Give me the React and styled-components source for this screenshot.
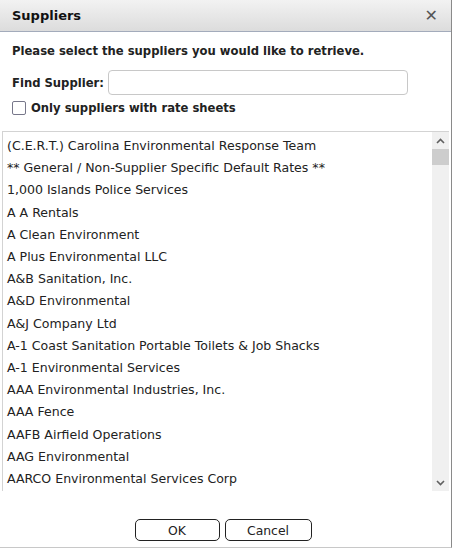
import React from 'react'
import styled, { createGlobalStyle } from 'styled-components'

const GlobalStyle = createGlobalStyle`
  html, body {
    margin: 0;
    padding: 0;
    background: #fff;
  }
  body {
    font-family: "DejaVu Sans", Verdana, sans-serif;
    color: #222;
  }
`

const Dialog = styled.div`
  width: 452px;
  height: 548px;
  box-sizing: border-box;
  display: flex;
  flex-direction: column;
  border-right: 1px solid #8a8a8a;
  border-bottom: 1px solid #c8c8c8;
  background: #fff;
`

const TitleBar = styled.div`
  height: 31px;
  flex-shrink: 0;
  display: flex;
  align-items: center;
  justify-content: space-between;
  padding: 0 12px;
  background: linear-gradient(#f2f2f2, #dcdcdc);
  border-bottom: 1px solid #a3abbb;
`

const Title = styled.span`
  font-size: 13px;
  font-weight: bold;
  color: #111;
`

const Close = styled.span`
  font-size: 16px;
  font-weight: bold;
  color: #555;
  margin-right: 1px;
  cursor: pointer;
`

const Body = styled.div`
  padding: 11px 0 0 12px;
  display: flex;
  flex-direction: column;
`

const Prompt = styled.div`
  font-size: 11.6px;
  font-weight: bold;
  line-height: 16px;
`

const FindRow = styled.div`
  display: flex;
  align-items: center;
  gap: 4px;
  margin-top: 11px;
  font-size: 11.6px;
  font-weight: bold;
`

const SearchInput = styled.input`
  width: 300px;
  height: 25px;
  box-sizing: border-box;
  border: 1px solid #c8c8c8;
  border-radius: 4px;
  outline: none;
`

const CheckRow = styled.label`
  display: flex;
  align-items: center;
  gap: 5px;
  margin-top: 6px;
  font-size: 11.6px;
  font-weight: bold;
`

const Box = styled.span`
  width: 12px;
  height: 12px;
  border: 1px solid #77778a;
  border-radius: 2px;
  background: #fff;
`

const ListWrap = styled.div`
  margin: 16px 2px 0 2px;
  height: 359px;
  display: flex;
  border: 1px solid #d3d3d3;
  border-bottom: none;
  border-right: none;
`

const List = styled.ul`
  flex: 1;
  list-style: none;
  margin: 0;
  padding: 3px 0 0 4px;
  overflow: hidden;
`

const Item = styled.li`
  font-size: 12.55px;
  line-height: 22.2px;
  white-space: nowrap;
  color: #222;
`

const ScrollBar = styled.div`
  width: 17px;
  display: flex;
  flex-direction: column;
  background: #f0f0f0;
`

const Arrow = styled.div`
  height: 17px;
  display: flex;
  align-items: center;
  justify-content: center;
`

const Track = styled.div`
  flex: 1;
`

const Thumb = styled.div`
  height: 16px;
  background: #cdcdcd;
`

const Footer = styled.div`
  flex: 1;
  display: flex;
  justify-content: center;
  align-items: flex-end;
  gap: 5px;
  padding-bottom: 6px;
  padding-right: 5px;
`

const Button = styled.button`
  width: ${ ({ wide }) => wide ? 87 : 85 }px;
  height: 22px;
  border: 1px solid #222;
  border-radius: 5px;
  background: #fff;
  font-family: "DejaVu Sans", Verdana, sans-serif;
  font-size: 12.4px;
  color: #222;
  padding: 0;
`

const suppliers = [
  '(C.E.R.T.) Carolina Environmental Response Team',
  '** General / Non-Supplier Specific Default Rates **',
  '1,000 Islands Police Services',
  'A A Rentals',
  'A Clean Environment',
  'A Plus Environmental LLC',
  'A&B Sanitation, Inc.',
  'A&D Environmental',
  'A&J Company Ltd',
  'A-1 Coast Sanitation Portable Toilets & Job Shacks',
  'A-1 Environmental Services',
  'AAA Environmental Industries, Inc.',
  'AAA Fence',
  'AAFB Airfield Operations',
  'AAG Environmental',
  'AARCO Environmental Services Corp',
]

const Chevron = ({ up }) => (
  <svg width="9" height="6" viewBox="0 0 9 6">
    <path
      d={up ? 'M1 5 L4.5 1.5 L8 5' : 'M1 1 L4.5 4.5 L8 1'}
      fill="none"
      stroke="#606060"
      strokeWidth="1.6"
    />
  </svg>
)

const App = () => (
  <>
    <GlobalStyle />
    <Dialog>
      <TitleBar>
        <Title>Suppliers</Title>
        <Close>✕</Close>
      </TitleBar>
      <Body>
        <Prompt>Please select the suppliers you would like to retrieve.</Prompt>
        <FindRow>
          Find Supplier:
          <SearchInput />
        </FindRow>
        <CheckRow>
          <Box />
          Only suppliers with rate sheets
        </CheckRow>
      </Body>
      <ListWrap>
        <List>
          { suppliers.map(name => <Item key={ name }>{ name }</Item>) }
        </List>
        <ScrollBar>
          <Arrow><Chevron up /></Arrow>
          <Track><Thumb /></Track>
          <Arrow><Chevron /></Arrow>
        </ScrollBar>
      </ListWrap>
      <Footer>
        <Button>OK</Button>
        <Button wide>Cancel</Button>
      </Footer>
    </Dialog>
  </>
)

export default App
